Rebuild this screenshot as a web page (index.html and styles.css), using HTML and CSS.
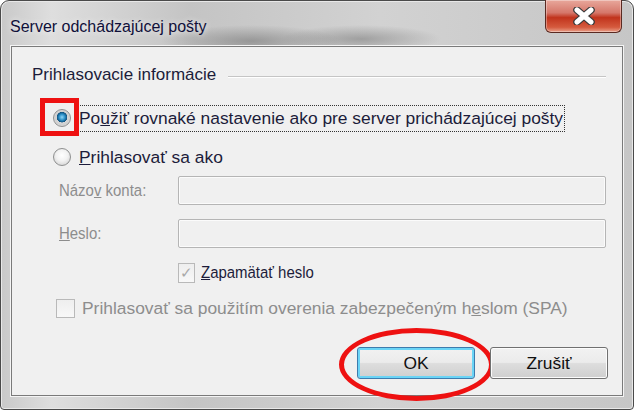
FILE: index.html
```html
<!DOCTYPE html>
<html lang="sk">
<head>
  <meta charset="UTF-8">
  <title>Server odchádzajúcej pošty</title>
  <link rel="stylesheet" href="styles.css">
</head>
<body>
  <div class="window">
    <div class="titlebar">
      <span class="title">Server odchádzajúcej pošty</span>
      <div class="close">
        <svg width="28" height="18" viewBox="0 0 28 18">
          <path d="M7 3 L21 15 M21 3 L7 15" stroke="#3a3a3a" stroke-width="7.5" stroke-linecap="round"/>
          <path d="M7 3 L21 15 M21 3 L7 15" stroke="#ffffff" stroke-width="5" stroke-linecap="round"/>
        </svg>
      </div>
    </div>

    <div class="client">
      <div class="group-head">
        <span>Prihlasovacie informácie</span>
        <span class="line"></span>
      </div>

      <div class="option first">
        <span class="radio checked"></span>
        <span class="focus">Po<u>u</u>žiť rovnaké nastavenie ako pre server prichádzajúcej pošty</span>
        <span class="mark-box"></span>
      </div>

      <div class="option second">
        <span class="radio"></span>
        <span><u>P</u>rihlasovať sa ako</span>
      </div>

      <div class="fields">
        <label class="disabled"><span class="narrow">Názo<u>v</u> konta:</span></label>
        <div class="textbox"></div>
        <label class="disabled"><span class="narrow"><u>H</u>eslo:</span></label>
        <div class="textbox"></div>
        <div></div>
        <div class="check-row">
          <span class="checkbox checked">&#10003;</span>
          <span class="narrow"><u>Z</u>apamätať heslo</span>
        </div>
      </div>

      <div class="spa disabled">
        <span class="checkbox"></span>
        <span>Prihlasovať sa použitím overenia zabezpečeným h<u>e</u>slom (SPA)</span>
      </div>

      <div class="buttons">
        <div class="button default">OK<span class="mark-ellipse"></span></div>
        <div class="button">Zrušiť</div>
      </div>
    </div>
  </div>
</body>
</html>
```

FILE: styles.css
```css
body {
  margin: 0;
  width: 634px;
  height: 410px;
  overflow: hidden;
  background: #ffffff;
  font-family: "Liberation Sans", Arial, sans-serif;
  font-size: 17.4px;
  color: #1c1c3a;
}
.window {
  height: 408px;
  border: 1px solid #4a4a4a;
  border-radius: 9px 9px 4px 4px;
  background:
    radial-gradient(ellipse 90px 16px at 250px 40px, rgba(110, 110, 110, 0.55), transparent),
    radial-gradient(ellipse 80px 14px at 360px 38px, rgba(110, 110, 110, 0.5), transparent),
    linear-gradient(90deg, #c9c9c9 0%, #dedede 8%, #c4c4c4 30%, #d2d2d2 60%, #c6c6c6 100%);
  box-shadow: inset 0 0 0 1px #e8e8e8;
}
.titlebar {
  height: 45px;
  display: flex;
  justify-content: space-between;
  align-items: flex-start;
}
.title {
  margin: 17px 0 0 9px;
  font-size: 16px;
  color: #10103a;
  text-shadow: 0 0 6px rgba(255, 255, 255, 0.9);
}
.close {
  width: 75px;
  height: 32px;
  margin: -1px 11px 0 0;
  border: 1px solid #5a2a22;
  border-top: none;
  border-radius: 0 0 6px 6px;
  background: linear-gradient(#e8a89c 0%, #d5776a 40%, #c1341d 55%, #d55a3e 85%, #e9a08a 100%);
  box-shadow: inset 0 0 0 1px rgba(255, 255, 255, 0.35);
  display: flex;
  align-items: center;
  justify-content: center;
}
.client {
  margin: 0 10px 0 10px;
  height: 350px;
  box-sizing: border-box;
  border: 1px solid #7a7a7a;
  box-shadow: 0 0 0 1px #f4f4f4;
  background: #f0f0f0;
  padding: 18px 16px 0 12px;
}
.group-head {
  display: flex;
  align-items: center;
  gap: 12px;
  height: 20px;
  margin-left: 8px;
  font-size: 17px;
}
.group-head .line {
  flex: 1;
  border-top: 1px solid #c5c5c5;
  border-bottom: 1px solid #ffffff;
  margin-top: 3px;
}
.option {
  display: flex;
  align-items: center;
  height: 26px;
  margin-left: 29px;
  gap: 8px;
  position: relative;
}
.option.first { margin-top: 20px; }
.option.second { margin-top: 13px; }
.focus {
  border: 1px dotted #333;
  padding: 2px 1px;
  margin-left: -2px;
}
.radio {
  width: 18px;
  height: 18px;
  border-radius: 50%;
  box-sizing: border-box;
  border: 1px solid #8e8f8f;
  background: radial-gradient(circle at 50% 40%, #ffffff 0%, #f2f2f2 45%, #c9c9c9 100%);
  flex: none;
}
.radio.checked {
  background:
    radial-gradient(circle at 50% 45%, #8fd6f6 0px, #2a8ec6 3px, #10527f 5px, transparent 5.5px),
    radial-gradient(circle, #e6e6e6 0%, #d0d0d0 60%, #f2f2f2 100%);
}
.mark-box {
  position: absolute;
  left: -13px;
  top: -7px;
  width: 29px;
  height: 28px;
  border: 5px solid #ee1111;
}
.fields {
  display: grid;
  grid-template-columns: 119px 428px;
  grid-template-rows: 29px 29px 21px;
  row-gap: 14px;
  align-items: center;
  margin: 6px 0 0 35px;
}
.disabled {
  color: #8d8d8d;
}
.narrow {
  display: inline-block;
  font-size: 17.4px;
  transform: scaleX(0.86);
  transform-origin: left center;
  white-space: nowrap;
}
.textbox {
  height: 29px;
  box-sizing: border-box;
  border: 1px solid #b5b5b5;
  border-radius: 2px;
  background: #f0f0f0;
  box-shadow: inset 0 0 0 1px #fbfbfb;
}
.check-row {
  display: flex;
  align-items: center;
  gap: 6px;
}
.checkbox {
  width: 17px;
  height: 20px;
  box-sizing: border-box;
  border: 1px solid #b9b9b9;
  background: linear-gradient(#eeeeee, #f8f8f8);
  color: #a9a9a9;
  font-size: 15px;
  line-height: 18px;
  text-align: center;
  flex: none;
}
.spa {
  display: flex;
  align-items: center;
  gap: 7px;
  margin: 15px 0 0 32px;
  height: 20px;
}
.spa .checkbox {
  width: 19px;
  height: 19px;
}
.buttons {
  display: flex;
  justify-content: flex-end;
  gap: 15px;
  margin: 29px -2px 0 0;
}
.button {
  width: 118px;
  height: 32px;
  box-sizing: border-box;
  border: 1px solid #707070;
  border-radius: 3px;
  background: linear-gradient(#f2f2f2 0%, #ebebeb 48%, #dddddd 52%, #cfcfcf 100%);
  box-shadow: inset 0 0 0 1px #fcfcfc;
  display: flex;
  align-items: center;
  justify-content: center;
  color: #101010;
  position: relative;
}
.button.default {
  border-color: #3d7bad;
  box-shadow: inset 0 0 0 2px #6ad4f6;
}
.mark-ellipse {
  position: absolute;
  left: -19px;
  top: -20px;
  width: 145px;
  height: 63px;
  border: 5px solid #ee1111;
  border-radius: 50%;
}
```
